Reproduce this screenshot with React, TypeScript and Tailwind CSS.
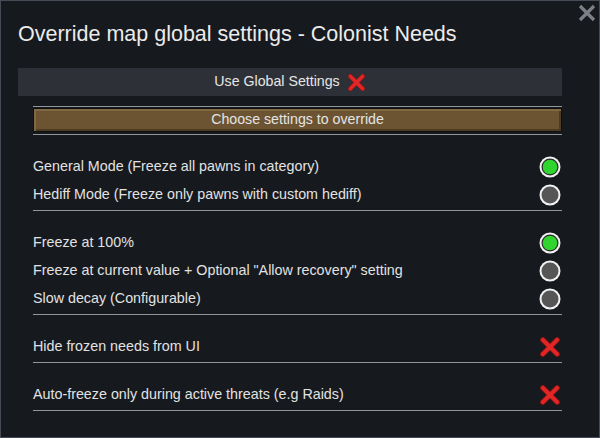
import React from 'react';

type Option = { label: string; on: boolean };

const modeOptions: Option[] = [
  { label: 'General Mode (Freeze all pawns in category)', on: true },
  { label: 'Hediff Mode (Freeze only pawns with custom hediff)', on: false },
];

const freezeOptions: Option[] = [
  { label: 'Freeze at 100%', on: true },
  { label: 'Freeze at current value + Optional "Allow recovery" setting', on: false },
  { label: 'Slow decay (Configurable)', on: false },
];

const toggles = ['Hide frozen needs from UI', 'Auto-freeze only during active threats (e.g Raids)'];

const RedCross: React.FC<{ size: number }> = ({ size }) => (
  <svg width={size} height={size} viewBox="0 0 20 20" className="shrink-0">
    <path d="M3.5 3.5 L16.5 16.5 M16.5 3.5 L3.5 16.5" stroke="#8c1414" strokeWidth="5" strokeLinecap="round" />
    <path d="M3.5 3.5 L16.5 16.5 M16.5 3.5 L3.5 16.5" stroke="#e02626" strokeWidth="3.6" strokeLinecap="round" />
  </svg>
);

const Radio: React.FC<{ on: boolean }> = ({ on }) => (
  <svg width="22" height="22" viewBox="0 0 22 22" className="shrink-0">
    <circle cx="11" cy="11" r="10.5" fill="#f2f2f2" />
    <circle cx="11" cy="11" r="8.5" fill={on ? '#2a2a2a' : '#565656'} />
    {on && <circle cx="11" cy="11" r="7.3" fill="#2fd42f" />}
  </svg>
);

const Divider = () => <div className="mt-px h-px bg-[#929599]" />;

const Row: React.FC<{ label: string; children: React.ReactNode }> = ({ label, children }) => (
  <div className="flex h-[28px] items-center justify-between pr-px">
    <span className="text-[14.3px] text-[#e2e2e2]">{label}</span>
    {children}
  </div>
);

export default function App() {
  return (
    <div
      className="relative h-[438px] w-[600px] overflow-hidden border border-[#454c56] bg-[#16191e] pl-[17px]"
      style={{ fontFamily: '"Liberation Sans", Arial, sans-serif' }}
    >
      {/* window close button */}
      <button className="absolute right-[3px] top-[3px] h-[18px] w-[18px]">
        <svg width="18" height="18" viewBox="0 0 18 18">
          <path d="M2 2 L16 16 M16 2 L2 16" stroke="#7c8086" strokeWidth="3.2" />
        </svg>
      </button>

      <h1 className="mt-[20px] text-[21.5px] leading-[26px] text-[#ebebeb]">
        Override map global settings - Colonist Needs
      </h1>

      <div className="mt-[21px] flex h-[28px] w-[544px] items-center justify-center gap-[7px] bg-[#2d3137]">
        <span className="text-[14.2px] text-[#e6e6e6]">Use Global Settings</span>
        <RedCross size={19} />
      </div>

      <div className="ml-[15px] w-[529px]">
        <div className="mt-[10px] h-px bg-[#929599]" />
        <button className="mt-px flex h-[24px] w-full items-center justify-center border border-[#101010] bg-[#6c5433] shadow-[inset_2px_2px_0_#806845,inset_-2px_-2px_0_#4d3c24] text-[14.2px] text-[#e4e4e4]">
          Choose settings to override
        </button>
        <div className="mt-[2px] h-px bg-[#929599]" />

        <div className="mt-[18px]">
          {modeOptions.map((o) => (
            <Row key={o.label} label={o.label}>
              <Radio on={o.on} />
            </Row>
          ))}
        </div>
        <Divider />

        <div className="mt-[18px]">
          {freezeOptions.map((o) => (
            <Row key={o.label} label={o.label}>
              <Radio on={o.on} />
            </Row>
          ))}
        </div>
        <Divider />

        {toggles.map((t) => (
          <div key={t}>
            <div className="mt-[18px]">
              <Row label={t}>
                <RedCross size={22} />
              </Row>
            </div>
            <Divider />
          </div>
        ))}
      </div>
    </div>
  );
}
